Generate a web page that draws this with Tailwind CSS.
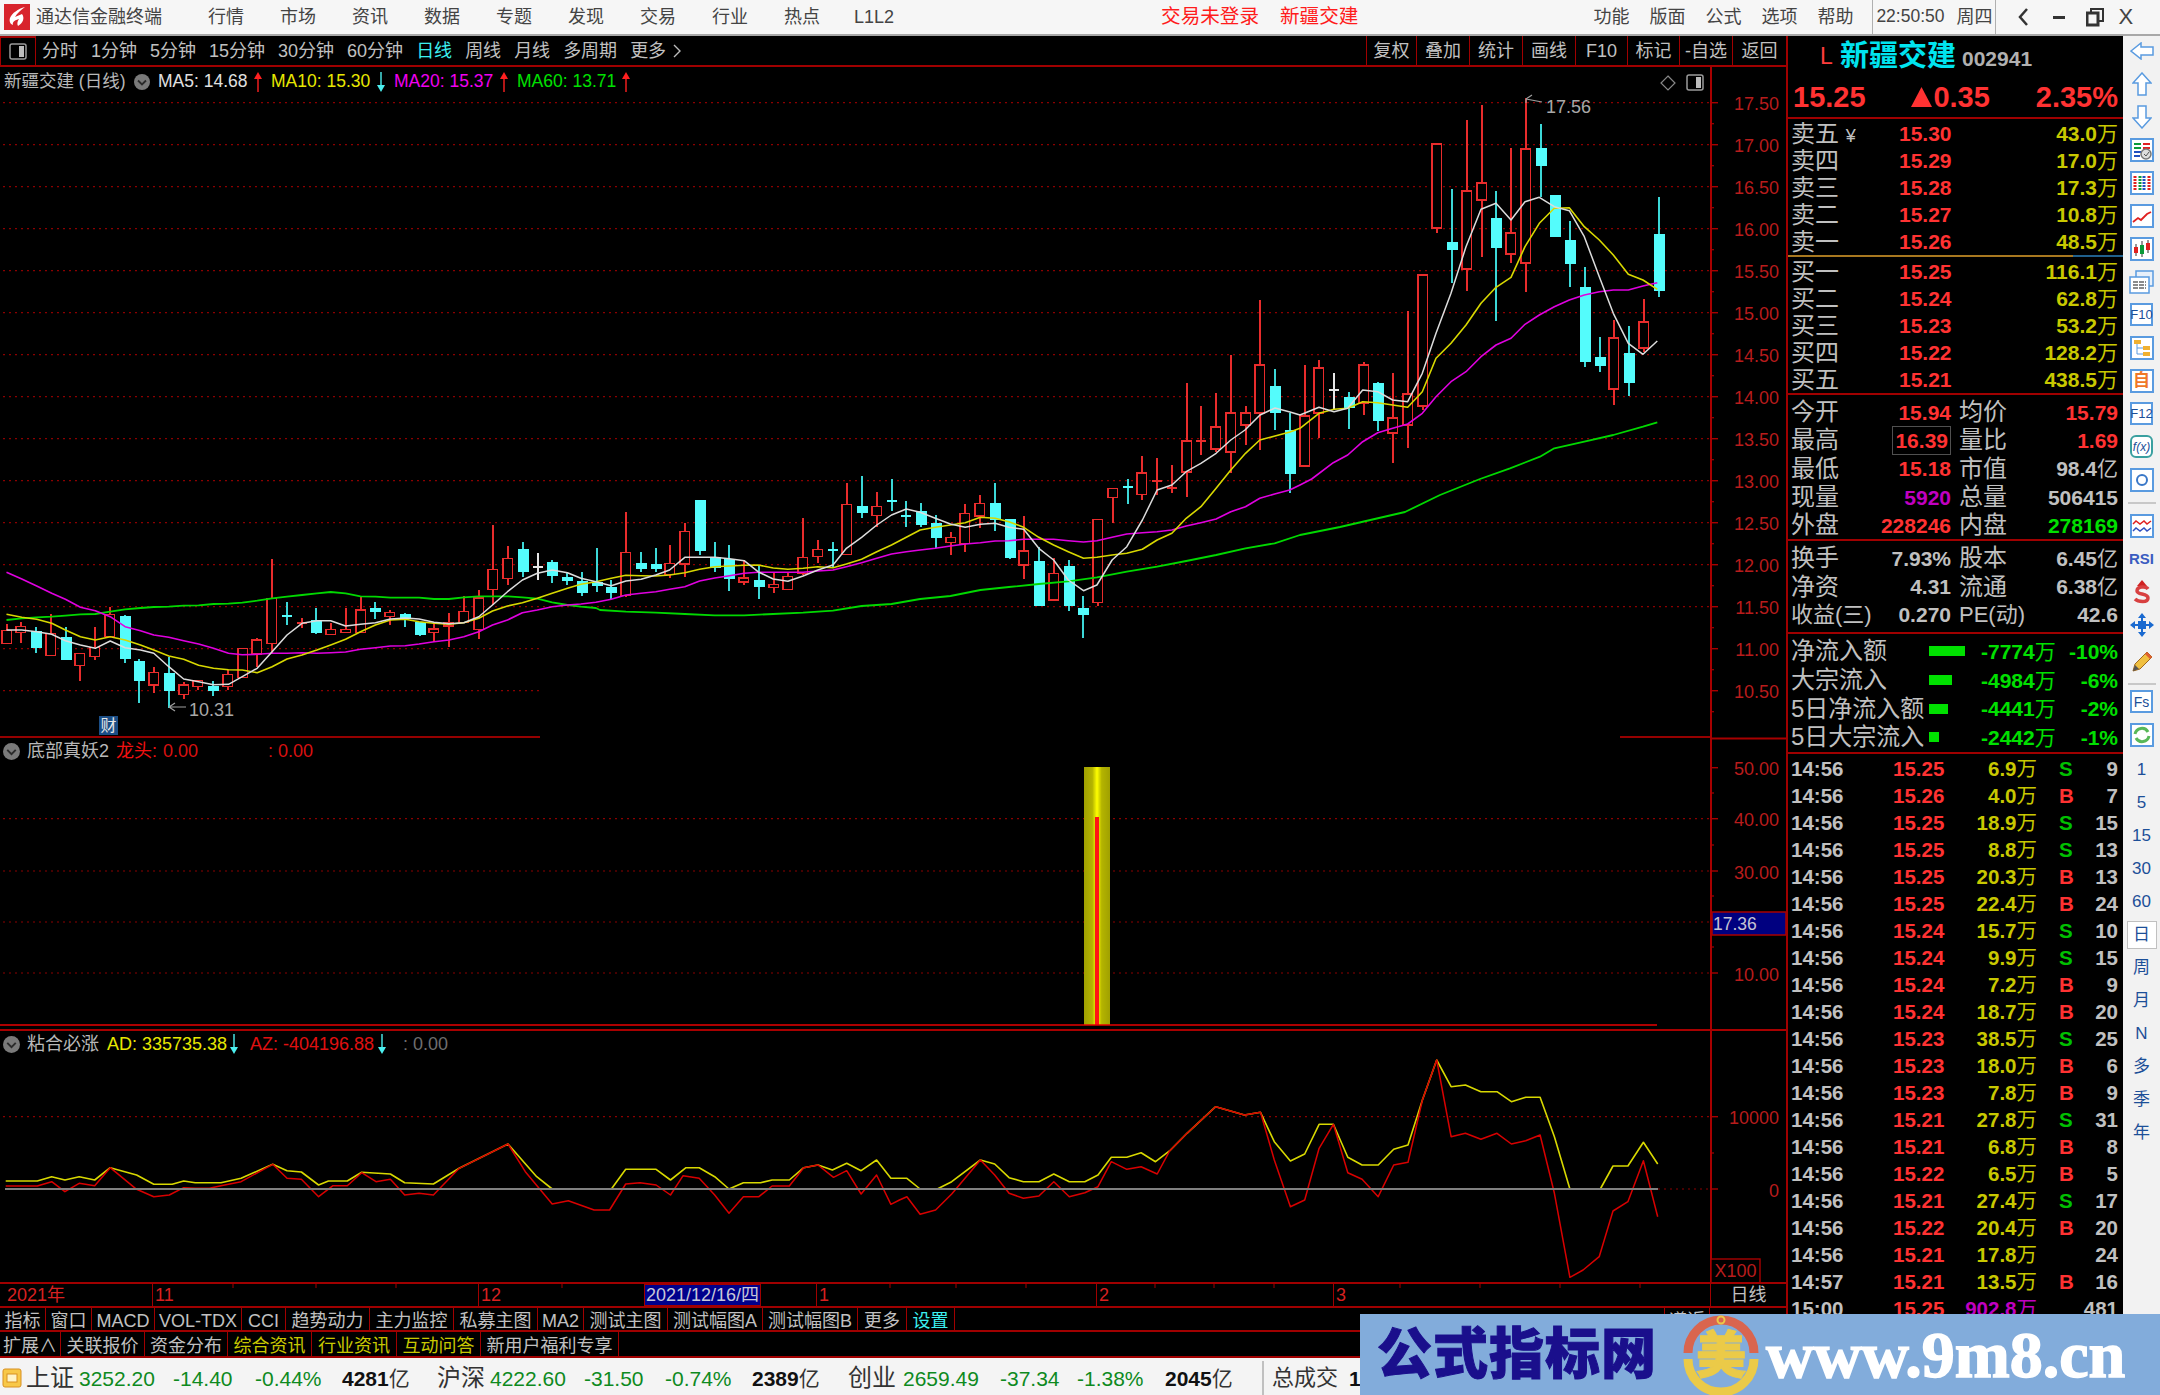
<!DOCTYPE html>
<html lang="zh">
<head>
<meta charset="utf-8">
<script src="https://cdn.jsdelivr.net/npm/@tailwindcss/browser@4"></script>
</head>
<body class="bg-black">
<div class="relative flex h-[1395px] w-[2160px] flex-col overflow-hidden bg-black [font-family:'Liberation_Sans','Noto_Sans_CJK_SC',sans-serif]">

  <!-- title bar -->
  <div class="flex h-[36px] shrink-0 items-center border-b-2 border-[#a8a8a8] bg-[#f6f6f6] text-[18px] leading-none text-[#444]">
    <svg class="ml-[4px] shrink-0" width="26" height="26" viewBox="0 0 26 26"><rect width="26" height="26" fill="#d8242c"/><path d="M21 3 C14 5 8 9 6 14 C5 17 6 20 9 21 C8 18 11 16 15 15 C13 18 13 20 14 22 C19 19 21 14 18 10 C16 11 13 12 11 13 C13 9 17 6 21 3 Z" fill="#fff"/></svg>
    <span class="ml-[6px]">通达信金融终端</span>
    <div class="ml-[46px] flex gap-[36px]"><span>行情</span><span>市场</span><span>资讯</span><span>数据</span><span>专题</span><span>发现</span><span>交易</span><span>行业</span><span>热点</span><span class="-ml-[2px]">L1L2</span></div>
    <span class="ml-[267px] text-[19.6px] text-[#ff1c1c]">交易未登录</span>
    <span class="ml-[21px] text-[19.6px] text-[#ff1c1c]">新疆交建</span>
    <div class="ml-[235px] flex gap-[20px]"><span>功能</span><span>版面</span><span>公式</span><span>选项</span><span>帮助</span></div>
    <div class="ml-[19px] flex h-full items-center border-x border-[#b0b0b0] pl-[3px] pr-[3px]"><span class="w-[80px] text-[17.5px]">22:50:50</span><span>周四</span></div>
    <svg class="ml-[20px]" width="14" height="20" viewBox="0 0 14 20"><path d="M11 2 L4 10 L11 18" fill="none" stroke="#333" stroke-width="2.5"/></svg>
    <svg class="ml-[22px]" width="14" height="20" viewBox="0 0 14 20"><rect x="1" y="9" width="12" height="3" fill="#333"/></svg>
    <svg class="ml-[20px]" width="18" height="20" viewBox="0 0 18 20"><rect x="5" y="2" width="12" height="12" fill="none" stroke="#333" stroke-width="2"/><rect x="1" y="6" width="11" height="12" fill="#f6f6f6" stroke="#333" stroke-width="3"/></svg>
    <span class="ml-[14px] text-[22px]">X</span>
  </div>

  <div class="flex min-h-0 flex-1">
    <!-- left -->
    <div class="flex w-[1786px] shrink-0 flex-col">
      <!-- period toolbar -->
      <div class="flex h-[31px] shrink-0 items-center border-b-2 border-[#a00000] text-[18px] leading-none text-[#c0c0c0]">
        <div class="flex h-full w-[36px] items-center justify-center border-x border-t-2 border-[#a00000]">
          <svg width="18" height="17" viewBox="0 0 18 17"><rect x="1" y="1" width="16" height="15" rx="2" fill="none" stroke="#9a9a9a" stroke-width="1.5"/><rect x="10" y="3" width="5" height="11" fill="#bdbdbd"/></svg>
        </div>
        <div class="ml-[6px] flex items-center gap-[13px]">
          <span>分时</span><span>1分钟</span><span>5分钟</span><span>15分钟</span><span>30分钟</span><span>60分钟</span><span class="text-[#3cf0f0]">日线</span><span>周线</span><span>月线</span><span>多周期</span>
          <span class="flex items-center gap-[6px]">更多<svg width="10" height="16" viewBox="0 0 10 16"><path d="M2 2 L8 8 L2 14" fill="none" stroke="#bbb" stroke-width="1.4"/></svg></span>
        </div>
        <div class="ml-auto flex h-full text-center">
          <span class="flex w-[50px] items-center justify-center border-l border-[#a00000]">复权</span>
          <span class="flex w-[53px] items-center justify-center border-l border-[#a00000]">叠加</span>
          <span class="flex w-[53px] items-center justify-center border-l border-[#a00000]">统计</span>
          <span class="flex w-[53px] items-center justify-center border-l border-[#a00000]">画线</span>
          <span class="flex w-[52px] items-center justify-center border-l border-[#a00000]">F10</span>
          <span class="flex w-[52px] items-center justify-center border-l border-[#a00000]">标记</span>
          <span class="flex w-[53px] items-center justify-center border-l border-[#a00000]">-自选</span>
          <span class="flex w-[54px] items-center justify-center border-l border-[#a00000]">返回</span>
        </div>
      </div>

      <!-- charts -->
      <div class="relative h-[1215px] w-full shrink-0 overflow-hidden">
        <svg id="chart" class="absolute left-0 top-0" width="1786" height="1215" viewBox="0 67 1786 1215"></svg>

        <div class="absolute left-[4px] top-[1px] flex h-[28px] items-center text-[17.5px] leading-none whitespace-nowrap">
          <span class="w-[130px] text-[#b8b8b8]">新疆交建 (日线)</span>
          <span class="w-[24px]"><svg width="16" height="16" viewBox="0 0 16 16"><circle cx="8" cy="8" r="8" fill="#7a7a7a"/><path d="M4 6.5 L8 10.5 L12 6.5" fill="none" stroke="#2a2a2a" stroke-width="1.8"/></svg></span>
          <span class="w-[96px] text-[#e0e0e0]">MA5: 14.68</span>
          <span class="w-[17px]"><svg width="8" height="20" viewBox="0 0 8 20"><path d="M4 20 V2" stroke="#ff2020" stroke-width="1.4"/><path d="M4 0 L8 7 H0 Z" fill="#ff2020"/></svg></span>
          <span class="w-[106px] text-[#e8e800]">MA10: 15.30</span>
          <span class="w-[17px]"><svg width="8" height="20" viewBox="0 0 8 20"><path d="M4 0 V18" stroke="#4cf0f0" stroke-width="1.4"/><path d="M4 20 L8 13 H0 Z" fill="#4cf0f0"/></svg></span>
          <span class="w-[106px] text-[#f000f0]">MA20: 15.37</span>
          <span class="w-[17px]"><svg width="8" height="20" viewBox="0 0 8 20"><path d="M4 20 V2" stroke="#ff2020" stroke-width="1.4"/><path d="M4 0 L8 7 H0 Z" fill="#ff2020"/></svg></span>
          <span class="w-[105px] text-[#00e000]">MA60: 13.71</span>
          <span class="w-[17px]"><svg width="8" height="20" viewBox="0 0 8 20"><path d="M4 20 V2" stroke="#ff2020" stroke-width="1.4"/><path d="M4 0 L8 7 H0 Z" fill="#ff2020"/></svg></span>
        </div>

        <div class="absolute left-[1660px] top-[7px] flex items-center gap-[10px]">
          <svg width="16" height="16" viewBox="0 0 16 16"><path d="M8 1 L15 8 L8 15 L1 8 Z" fill="none" stroke="#888" stroke-width="1.2"/></svg>
          <svg width="18" height="17" viewBox="0 0 18 17"><rect x="1" y="1" width="16" height="15" rx="2" fill="none" stroke="#9a9a9a" stroke-width="1.5"/><rect x="10" y="3" width="5" height="11" fill="#bdbdbd"/></svg>
        </div>

        <div class="absolute left-[99px] top-[649px] flex h-[19px] w-[19px] items-center justify-center bg-[#1b4e86] text-[16px] leading-none text-[#e8e8e8]">财</div>

        <div class="absolute left-[3px] top-[670px] flex h-[28px] items-center text-[18px] leading-none whitespace-nowrap">
          <span class="w-[24px]"><svg width="17" height="17" viewBox="0 0 16 16"><circle cx="8" cy="8" r="8" fill="#7a7a7a"/><path d="M4 6.5 L8 10.5 L12 6.5" fill="none" stroke="#2a2a2a" stroke-width="1.8"/></svg></span>
          <span class="w-[89px] text-[#b8b8b8]">底部真妖2</span>
          <span class="w-[47px] text-[#f01010]">龙头:</span>
          <span class="w-[105px] text-[#d81010]">0.00</span>
          <span class="text-[#d81010]">: 0.00</span>
        </div>

        <div class="absolute left-[3px] top-[963px] flex h-[28px] items-center text-[18px] leading-none whitespace-nowrap">
          <span class="w-[24px]"><svg width="17" height="17" viewBox="0 0 16 16"><circle cx="8" cy="8" r="8" fill="#7a7a7a"/><path d="M4 6.5 L8 10.5 L12 6.5" fill="none" stroke="#2a2a2a" stroke-width="1.8"/></svg></span>
          <span class="w-[80px] text-[#b8b8b8]">粘合必涨</span>
          <span class="w-[123px] text-[#e8e800]">AD: 335735.38</span>
          <span class="w-[20px]"><svg width="8" height="20" viewBox="0 0 8 20"><path d="M4 0 V18" stroke="#4cf0f0" stroke-width="1.4"/><path d="M4 20 L8 13 H0 Z" fill="#4cf0f0"/></svg></span>
          <span class="w-[128px] text-[#e01010]">AZ: -404196.88</span>
          <span class="w-[25px]"><svg width="8" height="20" viewBox="0 0 8 20"><path d="M4 0 V18" stroke="#4cf0f0" stroke-width="1.4"/><path d="M4 20 L8 13 H0 Z" fill="#4cf0f0"/></svg></span>
          <span class="text-[#6e6e6e]">: 0.00</span>
        </div>
      </div>

      <!-- date axis -->
      <div class="relative flex h-[24px] shrink-0 items-center border-t-2 border-[#a00000] text-[18px] leading-none text-[#d82020]">
        <span class="w-[152px] pl-[7px]">2021年</span>
        <span class="flex h-full w-[326px] items-center border-l border-[#a00000] pl-[2px]">11</span>
        <span class="flex h-full w-[166px] items-center border-l border-[#a00000] pl-[2px]">12</span>
        <span class="flex h-full w-[117px] items-center justify-center border border-[#a00000] bg-[#00008c] text-[#c8c8d8]">2021/12/16/四</span>
        <span class="w-[55px]"></span>
        <span class="flex h-full w-[280px] items-center border-l border-[#a00000] pl-[2px]">1</span>
        <span class="flex h-full w-[237px] items-center border-l border-[#a00000] pl-[2px]">2</span>
        <span class="flex h-full w-[377px] items-center border-l border-[#a00000] pl-[2px]">3</span>
        <span class="flex h-full flex-1 items-center justify-center border-l border-[#a00000] text-[#c0c0c0]">日线</span>
        <svg class="absolute left-0 top-0" width="1710" height="4" viewBox="0 0 1710 4"><path d="M233 0v4M316 0v4M396 0v4M562 0v4M890 0v4M956 0v4M1026 0v4M1155 0v4M1214 0v4M1274 0v4M1400 0v4M1480 0v4M1560 0v4M1640 0v4" stroke="#a00000"/></svg>
      </div>

      <!-- tabs 1 -->
      <div class="flex h-[26px] shrink-0 items-stretch border-y-2 border-[#a00000] text-[18px] leading-none whitespace-nowrap text-[#c0c0c0]">
        <span class="flex w-[46px] items-center justify-center border-r border-[#a00000] pt-[3px]">指标</span>
        <span class="flex w-[46px] items-center justify-center border-r border-[#a00000] pt-[3px]">窗口</span>
        <span class="flex w-[63px] items-center justify-center border-r border-[#a00000] pt-[3px]">MACD</span>
        <span class="flex w-[87px] items-center justify-center border-r border-[#a00000] pt-[3px]">VOL-TDX</span>
        <span class="flex w-[44px] items-center justify-center border-r border-[#a00000] pt-[3px]">CCI</span>
        <span class="flex w-[84px] items-center justify-center border-r border-[#a00000] pt-[3px]">趋势动力</span>
        <span class="flex w-[84px] items-center justify-center border-r border-[#a00000] pt-[3px]">主力监控</span>
        <span class="flex w-[84px] items-center justify-center border-r border-[#a00000] pt-[3px]">私募主图</span>
        <span class="flex w-[46px] items-center justify-center border-r border-[#a00000] pt-[3px]">MA2</span>
        <span class="flex w-[84px] items-center justify-center border-r border-[#a00000] pt-[3px]">测试主图</span>
        <span class="flex w-[95px] items-center justify-center border-r border-[#a00000] pt-[3px]">测试幅图A</span>
        <span class="flex w-[95px] items-center justify-center border-r border-[#a00000] pt-[3px]">测试幅图B</span>
        <span class="flex w-[49px] items-center justify-center border-r border-[#a00000] pt-[3px]">更多</span>
        <span class="flex w-[48px] items-center justify-center border-r border-[#a00000] pt-[3px] text-[#3cf0f0]">设置</span>
        <span class="ml-[709px] flex w-[46px] items-center justify-center border-x border-[#a00000] pt-[3px]">遵近</span>
      </div>
      <!-- tabs 2 -->
      <div class="flex h-[26px] shrink-0 items-stretch border-b-2 border-[#a00000] text-[18px] leading-none whitespace-nowrap text-[#c0c0c0]">
        <span class="flex w-[61px] items-center justify-center border-r border-[#a00000] pt-[3px]">扩展∧</span>
        <span class="flex w-[84px] items-center justify-center border-r border-[#a00000] pt-[3px]">关联报价</span>
        <span class="flex w-[83px] items-center justify-center border-r border-[#a00000] pt-[3px]">资金分布</span>
        <span class="flex w-[84px] items-center justify-center border-r border-[#a00000] pt-[3px] text-[#c8c800]">综合资讯</span>
        <span class="flex w-[85px] items-center justify-center border-r border-[#a00000] pt-[3px] text-[#c8c800]">行业资讯</span>
        <span class="flex w-[84px] items-center justify-center border-r border-[#a00000] pt-[3px] text-[#c8c800]">互动问答</span>
        <span class="flex w-[138px] items-center justify-center border-r border-[#a00000] pt-[3px]">新用户福利专享</span>
      </div>
    </div>

    <!-- quote panel -->
    <div class="flex w-[337px] shrink-0 flex-col overflow-hidden border-l-2 border-[#a00000] text-[#c0c0c0]">
      <div class="flex h-[41px] shrink-0 items-center pl-[32px] leading-none">
        <span class="w-[20px] text-[23px] text-[#ff3c3c]">L</span>
        <span class="text-[29px] font-bold text-[#00e4f0]">新疆交建</span>
        <span class="ml-[6px] pt-[4px] text-[21px] font-bold text-[#b0b0b0]">002941</span>
      </div>
      <div class="flex h-[42px] shrink-0 items-center justify-between border-b-2 border-[#a00000] pl-[5px] pr-[5px] text-[29px] font-bold leading-none text-[#ff3232]">
        <span>15.25</span>
        <span class="flex items-center gap-[1px]"><svg width="21" height="20" viewBox="0 0 21 20"><path d="M10.5 0 L21 20 H0 Z" fill="#ff3232"/></svg>0.35</span>
        <span>2.35%</span>
      </div>

      <div class="grid h-[136px] shrink-0 auto-rows-[27px] grid-cols-[108px_60px_159px] items-center pl-[3px] pt-px text-[21px] font-bold leading-none">
        <span class="text-[24px] font-normal whitespace-nowrap">卖五 <span class="text-[18px]">¥</span></span><span class="text-[#ff3232]">15.30</span><span class="text-right text-[#c8c800]">43.0<span class="font-normal">万</span></span>
        <span class="text-[24px] font-normal">卖四</span><span class="text-[#ff3232]">15.29</span><span class="text-right text-[#c8c800]">17.0<span class="font-normal">万</span></span>
        <span class="text-[24px] font-normal">卖三</span><span class="text-[#ff3232]">15.28</span><span class="text-right text-[#c8c800]">17.3<span class="font-normal">万</span></span>
        <span class="text-[24px] font-normal">卖二</span><span class="text-[#ff3232]">15.27</span><span class="text-right text-[#c8c800]">10.8<span class="font-normal">万</span></span>
        <span class="text-[24px] font-normal">卖一</span><span class="text-[#ff3232]">15.26</span><span class="text-right text-[#c8c800]">48.5<span class="font-normal">万</span></span>
      </div>
      <div class="flex h-[2px] shrink-0"><span class="w-[285px] bg-[#a87820]"></span><span class="flex-1 bg-[#20608c]"></span></div>
      <div class="grid h-[138px] shrink-0 auto-rows-[27px] grid-cols-[108px_60px_159px] items-center border-b-2 border-[#a00000] pl-[3px] pt-[1px] text-[21px] font-bold leading-none">
        <span class="text-[24px] font-normal">买一</span><span class="text-[#ff3232]">15.25</span><span class="text-right text-[#c8c800]">116.1<span class="font-normal">万</span></span>
        <span class="text-[24px] font-normal">买二</span><span class="text-[#ff3232]">15.24</span><span class="text-right text-[#c8c800]">62.8<span class="font-normal">万</span></span>
        <span class="text-[24px] font-normal">买三</span><span class="text-[#ff3232]">15.23</span><span class="text-right text-[#c8c800]">53.2<span class="font-normal">万</span></span>
        <span class="text-[24px] font-normal">买四</span><span class="text-[#ff3232]">15.22</span><span class="text-right text-[#c8c800]">128.2<span class="font-normal">万</span></span>
        <span class="text-[24px] font-normal">买五</span><span class="text-[#ff3232]">15.21</span><span class="text-right text-[#c8c800]">438.5<span class="font-normal">万</span></span>
      </div>

      <div class="grid h-[146px] shrink-0 auto-rows-[28.3px] grid-cols-[60px_100px_58px_109px] items-center border-b-2 border-[#a00000] pl-[3px] pt-[3px] text-[21px] font-bold leading-none">
        <span class="text-[24px] font-normal">今开</span><span class="text-right text-[#ff3232]">15.94</span><span class="pl-[8px] text-[24px] font-normal">均价</span><span class="text-right text-[#ff3232]">15.79</span>
        <span class="text-[24px] font-normal">最高</span><span class="justify-self-end border border-[#505050] px-[2px] py-[3px] text-[#ff3232]">16.39</span><span class="pl-[8px] text-[24px] font-normal">量比</span><span class="text-right text-[#ff3232]">1.69</span>
        <span class="text-[24px] font-normal">最低</span><span class="text-right text-[#ff3232]">15.18</span><span class="pl-[8px] text-[24px] font-normal">市值</span><span class="text-right">98.4<span class="font-normal">亿</span></span>
        <span class="text-[24px] font-normal">现量</span><span class="text-right text-[#c000c0]">5920</span><span class="pl-[8px] text-[24px] font-normal">总量</span><span class="text-right">506415</span>
        <span class="text-[24px] font-normal">外盘</span><span class="text-right text-[#ff3232]">228246</span><span class="pl-[8px] text-[24px] font-normal">内盘</span><span class="text-right text-[#00e000]">278169</span>
      </div>
      <div class="grid h-[93px] shrink-0 auto-rows-[28.4px] grid-cols-[60px_100px_58px_109px] items-center border-b-2 border-[#a00000] pl-[3px] pt-[3px] text-[21px] font-bold leading-none">
        <span class="text-[24px] font-normal">换手</span><span class="text-right">7.93%</span><span class="pl-[8px] text-[24px] font-normal">股本</span><span class="text-right">6.45<span class="font-normal">亿</span></span>
        <span class="text-[24px] font-normal">净资</span><span class="text-right">4.31</span><span class="pl-[8px] text-[24px] font-normal">流通</span><span class="text-right">6.38<span class="font-normal">亿</span></span>
        <span class="text-[22px] font-normal whitespace-nowrap">收益(三)</span><span class="text-right">0.270</span><span class="pl-[8px] text-[22px] font-normal whitespace-nowrap">PE(动)</span><span class="text-right">42.6</span>
      </div>
      <div class="grid h-[120px] shrink-0 auto-rows-[28.7px] grid-cols-[138px_52px_77px_60px] items-center border-b-2 border-[#a00000] pl-[3px] pt-[3px] text-[21px] font-bold leading-none text-[#00e000]">
        <span class="text-[24px] font-normal whitespace-nowrap text-[#c0c0c0]">净流入额</span><span class="block h-[10px] w-[36px] bg-[#00e000]"></span><span class="whitespace-nowrap">-7774<span class="font-normal">万</span></span><span class="text-right">-10%</span>
        <span class="text-[24px] font-normal whitespace-nowrap text-[#c0c0c0]">大宗流入</span><span class="block h-[10px] w-[23px] bg-[#00e000]"></span><span class="whitespace-nowrap">-4984<span class="font-normal">万</span></span><span class="text-right">-6%</span>
        <span class="text-[24px] font-normal whitespace-nowrap text-[#c0c0c0]">5日净流入额</span><span class="block h-[10px] w-[19px] bg-[#00e000]"></span><span class="whitespace-nowrap">-4441<span class="font-normal">万</span></span><span class="text-right">-2%</span>
        <span class="text-[24px] font-normal whitespace-nowrap text-[#c0c0c0]">5日大宗流入</span><span class="block h-[10px] w-[10px] bg-[#00e000]"></span><span class="whitespace-nowrap">-2442<span class="font-normal">万</span></span><span class="text-right">-1%</span>
      </div>

      <div class="grid auto-rows-[27px] grid-cols-[102px_60px_84px_23px_58px] items-center pl-[3px] pt-[2px] text-[20.5px] font-bold leading-none whitespace-nowrap">
        <span>14:56</span><span class="text-[#ff3232]">15.25</span><span class="text-right text-[#c8c800]">6.9<span class="font-normal">万</span></span><span class="pl-[22px] text-[#00c000]">S</span><span class="text-right">9</span>
        <span>14:56</span><span class="text-[#ff3232]">15.26</span><span class="text-right text-[#c8c800]">4.0<span class="font-normal">万</span></span><span class="pl-[22px] text-[#ff3232]">B</span><span class="text-right">7</span>
        <span>14:56</span><span class="text-[#ff3232]">15.25</span><span class="text-right text-[#c8c800]">18.9<span class="font-normal">万</span></span><span class="pl-[22px] text-[#00c000]">S</span><span class="text-right">15</span>
        <span>14:56</span><span class="text-[#ff3232]">15.25</span><span class="text-right text-[#c8c800]">8.8<span class="font-normal">万</span></span><span class="pl-[22px] text-[#00c000]">S</span><span class="text-right">13</span>
        <span>14:56</span><span class="text-[#ff3232]">15.25</span><span class="text-right text-[#c8c800]">20.3<span class="font-normal">万</span></span><span class="pl-[22px] text-[#ff3232]">B</span><span class="text-right">13</span>
        <span>14:56</span><span class="text-[#ff3232]">15.25</span><span class="text-right text-[#c8c800]">22.4<span class="font-normal">万</span></span><span class="pl-[22px] text-[#ff3232]">B</span><span class="text-right">24</span>
        <span>14:56</span><span class="text-[#ff3232]">15.24</span><span class="text-right text-[#c8c800]">15.7<span class="font-normal">万</span></span><span class="pl-[22px] text-[#00c000]">S</span><span class="text-right">10</span>
        <span>14:56</span><span class="text-[#ff3232]">15.24</span><span class="text-right text-[#c8c800]">9.9<span class="font-normal">万</span></span><span class="pl-[22px] text-[#00c000]">S</span><span class="text-right">15</span>
        <span>14:56</span><span class="text-[#ff3232]">15.24</span><span class="text-right text-[#c8c800]">7.2<span class="font-normal">万</span></span><span class="pl-[22px] text-[#ff3232]">B</span><span class="text-right">9</span>
        <span>14:56</span><span class="text-[#ff3232]">15.24</span><span class="text-right text-[#c8c800]">18.7<span class="font-normal">万</span></span><span class="pl-[22px] text-[#ff3232]">B</span><span class="text-right">20</span>
        <span>14:56</span><span class="text-[#ff3232]">15.23</span><span class="text-right text-[#c8c800]">38.5<span class="font-normal">万</span></span><span class="pl-[22px] text-[#00c000]">S</span><span class="text-right">25</span>
        <span>14:56</span><span class="text-[#ff3232]">15.23</span><span class="text-right text-[#c8c800]">18.0<span class="font-normal">万</span></span><span class="pl-[22px] text-[#ff3232]">B</span><span class="text-right">6</span>
        <span>14:56</span><span class="text-[#ff3232]">15.23</span><span class="text-right text-[#c8c800]">7.8<span class="font-normal">万</span></span><span class="pl-[22px] text-[#ff3232]">B</span><span class="text-right">9</span>
        <span>14:56</span><span class="text-[#ff3232]">15.21</span><span class="text-right text-[#c8c800]">27.8<span class="font-normal">万</span></span><span class="pl-[22px] text-[#00c000]">S</span><span class="text-right">31</span>
        <span>14:56</span><span class="text-[#ff3232]">15.21</span><span class="text-right text-[#c8c800]">6.8<span class="font-normal">万</span></span><span class="pl-[22px] text-[#ff3232]">B</span><span class="text-right">8</span>
        <span>14:56</span><span class="text-[#ff3232]">15.22</span><span class="text-right text-[#c8c800]">6.5<span class="font-normal">万</span></span><span class="pl-[22px] text-[#ff3232]">B</span><span class="text-right">5</span>
        <span>14:56</span><span class="text-[#ff3232]">15.21</span><span class="text-right text-[#c8c800]">27.4<span class="font-normal">万</span></span><span class="pl-[22px] text-[#00c000]">S</span><span class="text-right">17</span>
        <span>14:56</span><span class="text-[#ff3232]">15.22</span><span class="text-right text-[#c8c800]">20.4<span class="font-normal">万</span></span><span class="pl-[22px] text-[#ff3232]">B</span><span class="text-right">20</span>
        <span>14:56</span><span class="text-[#ff3232]">15.21</span><span class="text-right text-[#c8c800]">17.8<span class="font-normal">万</span></span><span></span><span class="text-right">24</span>
        <span>14:57</span><span class="text-[#ff3232]">15.21</span><span class="text-right text-[#c8c800]">13.5<span class="font-normal">万</span></span><span class="pl-[22px] text-[#ff3232]">B</span><span class="text-right">16</span>
        <span>15:00</span><span class="text-[#ff3232]">15.25</span><span class="text-right text-[#c000c0]">902.8<span class="font-normal">万</span></span><span></span><span class="text-right">481</span>
      </div>
    </div>

    <!-- tool strip -->
    <div class="flex w-[37px] shrink-0 flex-col items-center bg-[#f2f2f2] text-[17px] leading-none text-[#1c4f98]">
      <div class="-mt-[2px] flex h-[33px] w-full items-center justify-center"><svg width="24" height="18" viewBox="0 0 24 18"><path d="M1 9 L11 1 V5 H23 V13 H11 V17 Z" fill="#fff" stroke="#5a9be0" stroke-width="1.5"/></svg></div>
      <div class="flex h-[33px] w-full items-center justify-center"><svg width="20" height="24" viewBox="0 0 20 24"><path d="M10 1 L19 11 H14 V23 H6 V11 H1 Z" fill="#fff" stroke="#5a9be0" stroke-width="1.5"/></svg></div>
      <div class="flex h-[33px] w-full items-center justify-center"><svg width="20" height="24" viewBox="0 0 20 24"><path d="M10 23 L19 13 H14 V1 H6 V13 H1 Z" fill="#fff" stroke="#5a9be0" stroke-width="1.5"/></svg></div>
      <div class="flex h-[33px] w-full items-center justify-center"><svg width="24" height="24" viewBox="0 0 24 24"><rect x="1" y="1" width="22" height="22" fill="#fff" stroke="#5a9be0" stroke-width="2"/><path d="M4 6h7M4 10h7" stroke="#0a9a3a" stroke-width="2"/><path d="M13 6h7M13 10h7" stroke="#e02020" stroke-width="2"/><path d="M4 14h7M4 18h6" stroke="#2050c0" stroke-width="2"/><circle cx="16" cy="16" r="5" fill="#ddd" stroke="#777" stroke-width="1.5"/><path d="M14 16l2 2 3-4" fill="none" stroke="#555"/></svg></div>
      <div class="flex h-[33px] w-full items-center justify-center"><svg width="24" height="24" viewBox="0 0 24 24"><rect x="1" y="1" width="22" height="22" fill="#fff" stroke="#5a9be0" stroke-width="2"/><path d="M5 5v14" stroke="#e02020" stroke-width="3" stroke-dasharray="2 1"/><path d="M10 5v14" stroke="#0a9a3a" stroke-width="3" stroke-dasharray="2 1"/><path d="M14 5v14" stroke="#2050c0" stroke-width="3" stroke-dasharray="2 1"/><path d="M19 5v14" stroke="#e02020" stroke-width="3" stroke-dasharray="2 1"/></svg></div>
      <div class="flex h-[33px] w-full items-center justify-center"><svg width="24" height="24" viewBox="0 0 24 24"><rect x="1" y="1" width="22" height="22" fill="#fff" stroke="#5a9be0" stroke-width="2"/><path d="M3 18 L8 14 L11 16 L17 10 L21 8" fill="none" stroke="#e02020" stroke-width="1.8"/></svg></div>
      <div class="flex h-[33px] w-full items-center justify-center"><svg width="24" height="24" viewBox="0 0 24 24"><rect x="1" y="1" width="22" height="22" fill="#fff" stroke="#5a9be0" stroke-width="2"/><path d="M6 7v12M12 4v16M18 3v13" stroke="#333"/><rect x="4" y="10" width="4" height="6" fill="#e02020"/><rect x="10" y="8" width="4" height="9" fill="#0a9a3a"/><rect x="16" y="6" width="4" height="7" fill="#e02020"/></svg></div>
      <div class="flex h-[33px] w-full items-center justify-center"><svg width="26" height="24" viewBox="0 0 26 24"><rect x="7" y="1" width="17" height="15" fill="#e8f0fa" stroke="#5a9be0" stroke-width="1.5"/><rect x="1" y="7" width="19" height="16" fill="#fff" stroke="#5a9be0" stroke-width="1.5"/><path d="M4 12h13M4 15h13M4 18h13" stroke="#666" stroke-width="1.4" stroke-dasharray="5 1"/></svg></div>
      <div class="flex h-[33px] w-full items-center justify-center"><span class="flex h-[23px] w-[23px] items-center justify-center border-2 border-[#5a9be0] bg-white text-[13px] text-[#1c4f98]">F10</span></div>
      <div class="flex h-[33px] w-full items-center justify-center"><svg width="24" height="24" viewBox="0 0 24 24"><rect x="1" y="1" width="22" height="22" fill="#fff" stroke="#5a9be0" stroke-width="2"/><rect x="4" y="4" width="7" height="4" fill="#f0b030"/><rect x="13" y="10" width="7" height="4" fill="#f0b030"/><rect x="13" y="16" width="7" height="4" fill="#f0b030"/><path d="M7 8v10h6M7 12h6" fill="none" stroke="#5a9be0"/></svg></div>
      <div class="flex h-[33px] w-full items-center justify-center"><span class="flex h-[24px] w-[24px] items-center justify-center border-2 border-[#5a9be0] bg-white text-[17px] font-bold text-[#f07828]">自</span></div>
      <div class="flex h-[33px] w-full items-center justify-center"><span class="flex h-[23px] w-[23px] items-center justify-center border-2 border-[#5a9be0] bg-white text-[13px] text-[#1c4f98]">F12</span></div>
      <div class="flex h-[33px] w-full items-center justify-center"><span class="flex h-[23px] w-[23px] items-center justify-center rounded-[6px] border-2 border-[#3aa0a0] bg-white text-[12px] italic text-[#1c4f98]">f(x)</span></div>
      <div class="flex h-[33px] w-full items-center justify-center"><svg width="24" height="24" viewBox="0 0 24 24"><rect x="1" y="1" width="22" height="22" fill="#fff" stroke="#5a9be0" stroke-width="2"/><circle cx="12" cy="12" r="5" fill="none" stroke="#3a78c8" stroke-width="2"/></svg></div>
      <div class="flex h-[13px] w-full items-center justify-center"><span class="h-[2px] w-[28px] bg-[#c8c8c8]"></span></div>
      <div class="flex h-[33px] w-full items-center justify-center"><svg width="24" height="24" viewBox="0 0 24 24"><rect x="1" y="1" width="22" height="22" fill="#fff" stroke="#5a9be0" stroke-width="2"/><path d="M3 10l3-3 4 3 4-3 3 3 4-3" fill="none" stroke="#e02020" stroke-width="1.5"/><path d="M3 17l3-3 4 3 4-3 3 3 4-3" fill="none" stroke="#3050c0" stroke-width="1.5"/></svg></div>
      <div class="flex h-[33px] w-full items-center justify-center"><span class="text-[15px] font-bold text-[#3a5cc0]">RSI</span></div>
      <div class="flex h-[33px] w-full items-center justify-center"><svg width="20" height="24" viewBox="0 0 20 24"><path d="M10 0 L15 6 H5 Z" fill="#d02020"/><path d="M16 9 C14 6 5 6 5 11 C5 15 16 13 16 18 C16 23 6 22 3 19" fill="none" stroke="#d84040" stroke-width="3.5"/></svg></div>
      <div class="flex h-[33px] w-full items-center justify-center"><svg width="24" height="24" viewBox="0 0 24 24"><path d="M12 0l4 5H8zM12 24l-4-5h8zM0 12l5-4v8zM24 12l-5 4V8z" fill="#1a6ad0"/><rect x="8" y="8" width="8" height="8" fill="#1a6ad0"/><path d="M12 4v16M4 12h16" stroke="#1a6ad0" stroke-width="2"/></svg></div>
      <div class="flex h-[33px] w-full translate-y-[4px] items-center justify-center"><svg width="24" height="24" viewBox="0 0 24 24"><path d="M3 21 L5 14 L17 2 L22 7 L10 19 Z" fill="#f0c040" stroke="#a06820"/><path d="M16 3l5 5" stroke="#e06030" stroke-width="3"/><path d="M3 21l2-6 4 4z" fill="#555"/></svg></div>
      <div class="flex h-[11px] w-full translate-y-[4px] items-center justify-center"><span class="h-[2px] w-[28px] bg-[#c8c8c8]"></span></div>
      <div class="flex h-[33px] w-full items-center justify-center"><span class="flex h-[23px] w-[23px] items-center justify-center border-2 border-[#5a9be0] bg-white text-[14px] text-[#1c4f98]">Fs</span></div>
      <div class="flex h-[33px] w-full items-center justify-center"><svg width="24" height="24" viewBox="0 0 24 24"><rect x="1" y="1" width="22" height="22" fill="#fff" stroke="#5a9be0" stroke-width="2"/><path d="M5 11 A7 7 0 0 1 18 9 M19 13 A7 7 0 0 1 6 15" fill="none" stroke="#58b858" stroke-width="3"/></svg></div>
      <div class="mt-[2px] flex h-[33px] w-full items-center justify-center">1</div>
      <div class="flex h-[33px] w-full items-center justify-center">5</div>
      <div class="flex h-[33px] w-full items-center justify-center">15</div>
      <div class="flex h-[33px] w-full items-center justify-center">30</div>
      <div class="flex h-[33px] w-full items-center justify-center">60</div>
      <div class="flex h-[33px] w-full items-center justify-center"><span class="flex h-[28px] w-[30px] items-center justify-center border border-[#c0c0c0] bg-white">日</span></div>
      <div class="flex h-[33px] w-full items-center justify-center">周</div>
      <div class="flex h-[33px] w-full items-center justify-center">月</div>
      <div class="flex h-[33px] w-full items-center justify-center">N</div>
      <div class="flex h-[33px] w-full items-center justify-center">多</div>
      <div class="flex h-[33px] w-full items-center justify-center">季</div>
      <div class="flex h-[33px] w-full items-center justify-center">年</div>
    </div>
  </div>

  <!-- status bar -->
  <div class="flex h-[37px] shrink-0 items-center bg-[#f4f4f4] pt-[3px] text-[21px] leading-none whitespace-nowrap text-[#0e8a1e]">
    <span class="w-[26px] pl-[2px]"><svg width="20" height="20" viewBox="0 0 20 20"><rect x="1" y="1" width="18" height="18" rx="2" fill="#f8c848" stroke="#d89020"/><rect x="5" y="6" width="10" height="8" fill="#fff4c8" stroke="#d89020"/></svg></span>
    <span class="w-[53px] text-[24px] text-[#333]">上证</span>
    <span class="w-[94px]">3252.20</span><span class="w-[82px]">-14.40</span><span class="w-[87px]">-0.44%</span>
    <span class="w-[95px] font-bold text-[#111]">4281<span class="font-normal text-[#333]">亿</span></span>
    <span class="w-[53px] text-[24px] text-[#333]">沪深</span>
    <span class="w-[94px]">4222.60</span><span class="w-[81px]">-31.50</span><span class="w-[87px]">-0.74%</span>
    <span class="w-[96px] font-bold text-[#111]">2389<span class="font-normal text-[#333]">亿</span></span>
    <span class="w-[55px] text-[24px] text-[#333]">创业</span>
    <span class="w-[97px]">2659.49</span><span class="w-[77px]">-37.34</span><span class="w-[88px]">-1.38%</span>
    <span class="w-[97px] font-bold text-[#111]">2045<span class="font-normal text-[#333]">亿</span></span>
    <span class="flex h-full w-[87px] items-center border-l-2 border-[#c0c0c0] pl-[8px] text-[22px] text-[#333]">总成交</span>
    <span class="font-bold text-[#111]">1</span>
  </div>

  <!-- watermark banner -->
  <div class="absolute left-[1360px] top-[1314px] flex h-[81px] w-[800px] items-center bg-[#82acdb]">
    <span class="ml-[17px] w-[282px] text-[55px] font-black leading-none tracking-[1px] whitespace-nowrap text-[#1a0f8c] [-webkit-text-stroke:1px_#1a0f8c]">公式指标网</span>
    <svg class="ml-[24px] shrink-0" width="76" height="80" viewBox="0 0 76 80">
      <path d="M5 38 A33 33 0 0 1 71 38" fill="none" stroke="#d9654f" stroke-width="9"/>
      <path d="M5 44 A33 33 0 0 0 71 44" fill="none" stroke="#ebca48" stroke-width="9"/>
      <circle cx="38" cy="5" r="3.5" fill="none" stroke="#ebca48" stroke-width="2"/>
      <text x="38" y="58" text-anchor="middle" font-size="50" font-weight="900" fill="#ebca48" stroke="#ebca48">美</text>
    </svg>
    <span class="ml-[7px] [font-family:'Liberation_Serif',serif] text-[66px] font-bold leading-none whitespace-nowrap text-white [-webkit-text-stroke:1.5px_#fff]">www.9m8.cn</span>
  </div>
</div>

<script>
(function(){
  // helpers mapping zoom-crop readings back to page pixels
  var x8=function(p){return [p[0]/2.613,480+p[1]/3]};
  var x9=function(p){return [600+p[0]/2.24,440+p[1]/3]};
  var x7=function(p){return [1300+p[0]/3,80+p[1]/3]};
  var x10=function(p){return [p[0]/1.742,1020+p[1]/3]};
  var x11=function(p){return [900+p[0]/1.742,1020+p[1]/3]};
  var mapA=function(a,f){return a.map(f)};
  var poly=function(pts,color,w){return '<polyline fill="none" stroke="'+color+'" stroke-width="'+w+'" stroke-linejoin="round" points="'+pts.map(function(p){return p[0].toFixed(1)+','+p[1].toFixed(1)}).join(' ')+'"/>'};
  var s='';

  // grid
  var i,y;
  for(i=0;i<=14;i++){
    y=102.7+42*i;
    s+='<line x1="3" x2="'+(i>12?540:1710)+'" y1="'+y+'" y2="'+y+'" stroke="#8c0000" stroke-width="1.2" stroke-dasharray="2 4"/>';
  }
  [818.7,871,922,973,1116.7].forEach(function(v){s+='<line x1="3" x2="1710" y1="'+v+'" y2="'+v+'" stroke="#8c0000" stroke-width="1.2" stroke-dasharray="2 4"/>'});
  s+='<line x1="1658" x2="1710" y1="1189" y2="1189" stroke="#8c0000" stroke-width="1.2" stroke-dasharray="2 4"/>';

  // candles: [type, wickTop, bodyTop, bodyBottom, wickLow] c=cyan r=red w=white
  var a8=[['r',433,452,490,490],['r',425,440,458,490],['c',442,452,503,518],['r',402,460,526,526],['c',442,470,540,540],['r',518,520,557,603],['r',442,503,530,540],['r',380,403,470,470],['c',405,407,536,550],['c',538,542,603,670],['r',560,578,615,638],['c',530,578,634,685],['r',605,615,643,657],['r',600,602,620,630],['c',604,617,634,648],['r',570,583,620,630],['r',505,506,593,595],['r',475,480,522,560],['r',236,355,490,520],['c',365,405,410,436],['r',415,425,432,445],['c',385,421,460,463],['r',430,448,463,463],['r',384,448,458,460],['r',352,390,458,460],['c',366,384,396,418],['r',390,398,410,436],['c',400,403,416,440],['c',425,427,464,468],['r',432,447,458,485],['r',398,428,438,500],['r',348,394,428,430],['r',330,354,448,478],['r',136,268,328,375],['r',198,236,296,315],['c',185,208,275,290],['w',218,258,261,300],['c',240,245,288,310],['c',275,290,302,316],['c',275,303,338,347],['c',204,306,318,335]];
  var a9=[['c',420,441,458,476],['r',215,338,466,470],['c',337,369,386,395],['c',323,373,386,396],['r',315,370,404,415],['r',250,275,372,412],['c',180,180,332,345],['c',305,352,384,395],['c',315,358,417,454],['r',360,414,426,435],['c',378,419,440,476],['r',398,433,443,458],['r',400,410,448,448],['r',234,352,400,405],['r',300,329,349,368],['c',305,328,331,380],['r',130,194,344,345],['c',107,197,219,233],['r',157,199,227,260],['c',117,180,183,212],['c',183,226,232,260],['c',188,212,255,260],['c',225,248,295,325],['r',275,293,308,345],['r',193,221,310,335],['r',166,190,228,265],['c',130,188,240,272],['c',238,238,355,358],['r',229,333,375,418],['c',320,364,498,498],['r',355,401,480,480],['c',360,377,498,512],['c',468,503,525,593],['r',238,238,488,498],['r',145,145,173,250],['c',116,139,142,192],['r',48,99,164,180],['r',53,121,124,165],['r',76,140,147,160]];
  var a=[];
  a8.forEach(function(c){a.push([c[0],480+c[1]/3,480+c[2]/3,480+c[3]/3,480+c[4]/3])});
  a9.forEach(function(c){a.push([c[0],440+c[1]/3,440+c[2]/3,440+c[3]/3,440+c[4]/3])});
  // i80..i112 in page pixels
  a=a.concat([['r',383,441,472,497],['r',406,440,442,455],['r',393,427,449,452],['r',355,413,452,473],['r',406,413,425,445],['r',300,365,413,450],['c',369,386,413,430],['c',413,430,474,493],['r',365,416,466,466],['r',360,368,413,438],['w',373,389,391,410],['c',392,397,408,429],['r',362,365,403,415],['c',382,383,421,431],['r',373,418,433,463],['r',311,394,425,448],['r',275,275,406,410],['r',144,144,228,233],['c',189,242,250,283],['r',120,191,269,291],['r',105,183,200,257],['c',191,218,248,321],['r',148,233,254,263],['r',98,149,263,292],['c',124,148,166,197],['c',195,195,237,237],['c',221,240,264,287],['c',267,287,362,367],['c',337,357,366,372],['r',320,338,389,405],['c',326,353,383,396],['r',299,322,348,352],['c',197,234,291,297]]);
  var colors={c:'#54fcfc',r:'#e82c2c',w:'#e6e6e6'};
  a.forEach(function(c,k){
    var x=Math.round(6.5+14.75*k),col=colors[c[0]],wc=c[0]==='c'?'#3cd8d8':col;
    s+='<g shape-rendering="crispEdges">';
    s+='<rect x="'+(x-1)+'" y="'+c[1]+'" width="1.6" height="'+(c[4]-c[1])+'" fill="'+wc+'"/>';
    if(c[3]-c[2]<2.5){
      s+='<rect x="'+(x-5)+'" y="'+c[2]+'" width="10" height="2" fill="'+col+'"/>';
    }else if(c[0]==='r'){
      s+='<rect x="'+(x-5)+'" y="'+c[2]+'" width="9.5" height="'+(c[3]-c[2])+'" fill="#000" stroke="'+col+'" stroke-width="1.6"/>';
    }else{
      s+='<rect x="'+(x-5.5)+'" y="'+c[2]+'" width="11" height="'+(c[3]-c[2])+'" fill="'+col+'"/>';
    }
    s+='</g>';
  });

  // moving averages
  var green=mapA([[17,420],[57,415],[96,412],[135,410],[171,407],[210,403],[249,402],[288,395],[327,388],[367,384],[402,381],[441,380],[480,377],[519,376],[558,372],[597,371],[633,368],[672,362],[711,355],[750,350],[789,345],[828,340],[864,336],[903,340],[942,349],[981,350],[1020,353],[1059,353],[1095,353],[1134,357],[1173,357],[1212,352],[1251,349],[1287,349],[1326,349],[1365,352],[1404,356],[1443,367],[1483,375],[1518,380],[1557,384]],x8)
    .concat(mapA([[0,510],[58,515],[125,518],[190,522],[257,526],[323,526],[388,522],[455,518],[522,512],[586,498],[653,492],[717,477],[785,468],[852,450],[916,441],[983,432],[1049,424],[1113,412],[1180,395],[1248,380],[1313,363],[1380,345],[1446,325],[1511,310],[1568,285]],x9))
    .concat([[1340,527],[1405,512],[1440,495]])
    .concat(mapA([[540,1197],[630,1165],[720,1130],[763,1105],[853,1085],[940,1065],[1029,1040],[1072,1027]],x7));
  var magenta=mapA([[17,277],[57,297],[96,318],[135,340],[171,358],[210,382],[249,392],[288,410],[327,440],[367,452],[402,465],[441,472],[480,482],[519,492],[558,505],[597,520],[633,524],[672,523],[711,520],[750,520],[789,518],[828,520],[864,518],[903,516],[942,508],[981,503],[1020,498],[1059,497],[1095,492],[1134,485],[1173,480],[1212,470],[1251,455],[1287,435],[1326,420],[1365,398],[1404,390],[1443,380],[1483,375],[1518,372],[1557,367]],x8)
    .concat(mapA([[25,478],[58,465],[92,460],[125,455],[156,448],[190,440],[223,423],[257,414],[290,407],[323,400],[354,397],[388,397],[421,397],[455,397],[488,393],[522,390],[552,380],[586,368],[620,355],[653,342],[686,335],[717,330],[751,325],[785,318],[818,312],[852,308],[885,303],[916,302],[949,298],[983,298],[1016,298],[1049,302],[1083,306],[1113,302],[1147,292],[1180,282],[1215,278],[1248,275],[1281,270],[1313,258],[1346,248],[1380,237],[1413,215],[1446,200],[1478,175],[1511,162],[1545,150],[1568,135]],x9))
    .concat(mapA([[35,1197],[100,1148],[143,1125],[188,1085],[233,1058],[278,1045],[323,1032],[367,1000],[408,950],[453,905],[498,875],[543,830],[588,795],[633,775],[675,733],[718,705],[763,680],[808,660],[853,645],[898,635],[940,630],[985,630],[1029,618],[1072,608]],x7));
  var yellow=mapA([[17,403],[57,412],[96,418],[135,430],[171,450],[210,470],[249,480],[288,470],[327,480],[367,495],[402,510],[441,528],[480,538],[519,556],[558,565],[597,569],[633,570],[672,578],[711,560],[750,537],[789,525],[828,510],[864,495],[903,478],[942,455],[981,435],[1020,420],[1059,418],[1095,425],[1134,430],[1173,433],[1212,428],[1251,415],[1287,393],[1326,378],[1365,368],[1404,355],[1443,340],[1483,325],[1518,313],[1557,305]],x8)
    .concat(mapA([[25,415],[58,406],[92,407],[125,408],[156,405],[190,398],[223,388],[257,380],[290,378],[323,376],[354,375],[388,384],[421,388],[455,385],[488,380],[522,383],[552,372],[586,358],[620,335],[653,315],[686,292],[717,270],[751,262],[785,255],[818,248],[852,232],[885,235],[916,245],[949,262],[983,292],[1016,315],[1049,335],[1083,355],[1113,352],[1147,345],[1180,340],[1215,328],[1248,300],[1281,280],[1313,235],[1346,200],[1380,145],[1413,90],[1446,40],[1478,0]],x9))
    .concat([[1275,436],[1290,432]])
    .concat(mapA([[0,1045],[57,1000],[102,988],[143,985],[188,965],[233,968],[278,975],[323,982],[367,935],[408,835],[453,790],[498,735],[543,670],[588,622],[633,592],[675,500],[718,430],[763,385],[808,383],[853,440],[898,480],[940,525],[985,583],[1029,600],[1072,628]],x7));
  var white=mapA([[17,450],[57,450],[96,455],[135,463],[171,482],[210,495],[249,505],[288,483],[327,503],[367,510],[402,520],[441,560],[480,597],[519,605],[558,614],[597,613],[633,590],[672,565],[711,515],[750,465],[789,430],[828,422],[864,422],[903,438],[942,433],[981,428],[1020,417],[1059,414],[1095,417],[1134,427],[1173,431],[1212,428],[1251,410],[1287,375],[1326,335],[1365,300],[1404,280],[1443,270],[1483,278],[1518,295],[1557,305]],x8)
    .concat(mapA([[25,437],[58,423],[92,418],[125,405],[156,390],[190,352],[223,352],[257,352],[290,356],[323,362],[354,395],[388,417],[421,424],[455,408],[488,390],[522,375],[552,325],[586,292],[620,255],[653,225],[686,207],[717,217],[751,235],[785,252],[818,262],[852,253],[885,250],[916,262],[949,268],[983,325],[1016,360],[1049,420],[1083,452],[1113,435],[1147,360],[1180,320],[1215,240],[1248,150],[1281,135],[1313,95],[1346,70],[1380,40],[1413,0]],x9))
    .concat([[1245,430],[1260,415],[1275,408],[1290,412]])
    .concat(mapA([[0,1005],[57,982],[102,995],[143,985],[188,930],[233,935],[278,960],[323,965],[367,880],[408,760],[453,640],[498,500],[543,388],[588,370],[633,420],[675,365],[718,352],[763,380],[808,392],[853,470],[898,590],[940,700],[985,790],[1029,823],[1072,783]],x7));
  s+=poly(green,'#00d800',1.8)+poly(magenta,'#e000e0',1.6)+poly(yellow,'#d8d800',1.6)+poly(white,'#dcdcdc',1.5);

  // price extremes
  s+='<path d="M1542 102 L1526 99 M1526 99 l6 -4 M1526 99 v4" fill="none" stroke="#a0a0a0" stroke-width="1.2"/>';
  s+='<text x="1546" y="112.5" font-size="18" fill="#a8a8a8">17.56</text>';
  s+='<path d="M186 707 H169 M169 707 l6 -4 M169 707 l6 4" fill="none" stroke="#a0a0a0" stroke-width="1.2"/>';
  s+='<text x="189" y="715.5" font-size="18" fill="#a8a8a8">10.31</text>';

  // panel 2 column
  s+='<defs><linearGradient id="g1" x1="0" x2="1" y1="0" y2="0"><stop offset="0" stop-color="#a0a000"/><stop offset="0.32" stop-color="#b4b400"/><stop offset="0.5" stop-color="#ffff00"/><stop offset="0.68" stop-color="#b4b400"/><stop offset="1" stop-color="#a0a000"/></linearGradient></defs>';
  s+='<rect x="1084" y="767" width="26" height="258" fill="url(#g1)"/><rect x="1095" y="817" width="4" height="208" fill="#ff1414"/>';

  // panel dividers
  s+='<line x1="0" x2="540" y1="737" y2="737" stroke="#c80000" stroke-width="1.6"/>';
  s+='<line x1="1620" x2="1711" y1="737" y2="737" stroke="#c80000" stroke-width="1.6"/>';
  s+='<line x1="1711" x2="1786" y1="738.5" y2="738.5" stroke="#a80000" stroke-width="2"/>';
  s+='<line x1="0" x2="1657" y1="1025" y2="1025" stroke="#e80000" stroke-width="1.6"/>';
  s+='<line x1="0" x2="1786" y1="1030" y2="1030" stroke="#a80000" stroke-width="2"/>';

  // panel 3 lines
  var yel3=mapA([[10,483],[65,483],[90,470],[113,480],[138,470],[165,480],[192,443],[238,465],[268,493],[300,493],[320,483],[340,488],[385,488],[420,475],[475,433],[500,452],[525,456],[555,495],[572,483],[605,483],[630,457],[680,462],[705,488],[755,492],[800,445],[885,372],[935,470],[962,507],[1065,507],[1090,448],[1143,448],[1168,480],[1195,443],[1218,443],[1245,470],[1270,507],[1295,488],[1325,488],[1345,480],[1375,480],[1400,443],[1425,435],[1450,450],[1475,430],[1500,452],[1527,420],[1552,475],[1567,475]],x10)
    .concat(mapA([[12,475],[35,507],[65,507],[90,485],[140,420],[165,432],[190,473],[215,485],[242,485],[268,462],[295,485],[322,485],[345,465],[368,412],[395,412],[420,398],[445,425],[470,392],[500,340],[550,260],[600,285],[628,277],[652,365],[680,423],[705,402],[730,313],[755,313],[780,412],[805,435],[833,435],[860,388],[885,375],[910,240],[935,120],[960,200],[985,195],[1012,215],[1040,215],[1065,245],[1090,232],[1115,232],[1140,350],[1167,507],[1220,507],[1242,438],[1268,438],[1295,367],[1320,432]],x11));
  var red3=mapA([[10,498],[65,498],[90,485],[113,515],[138,490],[165,497],[192,443],[238,508],[268,530],[295,525],[320,503],[340,505],[365,505],[385,497],[420,485],[475,433],[500,475],[525,478],[555,530],[580,497],[605,497],[630,458],[655,485],[680,478],[705,525],[730,520],[755,525],[800,445],[885,372],[915,455],[962,552],[990,542],[1035,570],[1062,570],[1090,492],[1115,488],[1143,495],[1168,525],[1190,467],[1218,475],[1245,525],[1270,580],[1295,530],[1322,530],[1345,498],[1375,498],[1400,443],[1425,435],[1452,472],[1475,452],[1500,522],[1527,465],[1552,553],[1567,540]],x10)
    .concat(mapA([[12,530],[35,583],[62,570],[90,522],[140,420],[165,465],[190,520],[215,535],[242,528],[268,485],[295,530],[322,518],[345,500],[368,425],[395,448],[420,440],[448,462],[470,392],[500,340],[550,260],[600,285],[628,277],[652,420],[680,560],[705,540],[730,385],[755,313],[780,458],[805,478],[833,530],[860,435],[885,427],[910,240],[935,120],[960,350],[985,340],[1012,358],[1040,340],[1065,372],[1090,362],[1115,345],[1140,520],[1167,772],[1190,750],[1218,710],[1242,573],[1268,545],[1295,422],[1320,590]],x11));
  s+=poly(yel3,'#d8d800',1.6)+poly(red3,'#d80000',1.5);
  s+='<line x1="5" x2="1658" y1="1189" y2="1189" stroke="#808080" stroke-width="2"/>';

  // axis
  s+='<line x1="1711" x2="1711" y1="67" y2="1282" stroke="#a80000" stroke-width="2"/>';
  var labels=['17.50','17.00','16.50','16.00','15.50','15.00','14.50','14.00','13.50','13.00','12.50','12.00','11.50','11.00','10.50'];
  labels.forEach(function(t,k){
    y=102.7+42*k;
    s+='<line x1="1711" x2="1718" y1="'+y+'" y2="'+y+'" stroke="#a80000" stroke-width="1.4"/>';
    s+='<line x1="1711" x2="1714" y1="'+(y+21)+'" y2="'+(y+21)+'" stroke="#a80000" stroke-width="1.2"/>';
    s+='<text x="1779" y="'+(y+7.5)+'" text-anchor="end" font-size="18" fill="#b81c1c">'+t+'</text>';
  });
  [['50.00',767.7],['40.00',818.7],['30.00',871],['10.00',973]].forEach(function(t){
    s+='<line x1="1711" x2="1718" y1="'+t[1]+'" y2="'+t[1]+'" stroke="#a80000" stroke-width="1.4"/>';
    s+='<text x="1779" y="'+(t[1]+7.5)+'" text-anchor="end" font-size="18" fill="#b81c1c">'+t[0]+'</text>';
  });
  [793,845,896,947].forEach(function(v){s+='<line x1="1711" x2="1714" y1="'+v+'" y2="'+v+'" stroke="#a80000" stroke-width="1.2"/>'});
  s+='<line x1="1711" x2="1718" y1="1116.7" y2="1116.7" stroke="#a80000" stroke-width="1.4"/><text x="1779" y="1124" text-anchor="end" font-size="18" fill="#b81c1c">10000</text>';
  s+='<line x1="1711" x2="1714" y1="1153" y2="1153" stroke="#a80000" stroke-width="1.2"/>';
  s+='<line x1="1711" x2="1718" y1="1189" y2="1189" stroke="#a80000" stroke-width="1.4"/><text x="1779" y="1196.5" text-anchor="end" font-size="18" fill="#b81c1c">0</text>';
  s+='<rect x="1712" y="912" width="74" height="23" fill="#000080" stroke="#a80000" stroke-width="1.5"/><text x="1713" y="930" font-size="17.5" fill="#c4c4d4">17.36</text>';
  s+='<rect x="1711" y="1259" width="49" height="24" fill="#000" stroke="#a80000" stroke-width="1.4"/><text x="1735.5" y="1277" text-anchor="middle" font-size="18" fill="#b81c1c">X100</text>';

  document.getElementById('chart').innerHTML=s;
})();
</script>
</body>
</html>
